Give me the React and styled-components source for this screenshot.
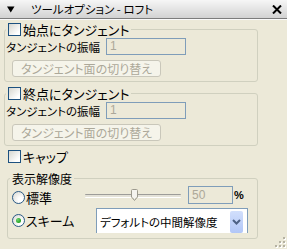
import React from "react";
import styled, { createGlobalStyle } from "styled-components";

const GlobalStyle = createGlobalStyle`
  html, body {
    margin: 0;
    padding: 0;
    background: #ece9d8;
  }
  body {
    font-family: "Noto Sans CJK JP", "Noto Sans", sans-serif;
    font-size: 13px;
    color: #000;
  }
  /* narrow kana like the old UI gothic face */
  body * {
    font-feature-settings: "palt";
  }
`;

const Panel = styled.div`
  position: relative;
  width: 287px;
  height: 249px;
  background: #ece9d8;
  overflow: hidden;
  font-size: 13px;
`;

const TitleBar = styled.div`
  height: 18px;
  display: flex;
  align-items: center;
  padding: 0 5px 0 7px;
  background: linear-gradient(#f6f6f6, #d2d2d2);
  border-bottom: 1px solid #7c7c7c;
  box-shadow: 0 1px 0 #fafafa;
`;

const Title = styled.span`
  flex: 1;
  margin-left: 16px;
  font-size: 11.5px;
  line-height: 18px;
  white-space: pre;
`;

const Body = styled.div`
  padding: 4px 0 0 4px;
`;

const Group = styled.div`
  box-sizing: border-box;
  width: ${p => p.$width}px;
  margin: ${p => p.$top}px 0 0 ${p => p.$left || 0}px;
  padding: 0 0 ${p => p.$bottom}px ${p => p.$padLeft}px;
  border: 1px solid #d0d0bf;
  border-radius: 3px;
`;

// caption sits on the group's top border and hides it behind its text
const GroupHead = styled.div`
  display: flex;
  align-items: center;
  width: max-content;
  height: 13px;
  line-height: 13px;
  margin: -7px 0 0 ${p => p.$shift || 0}px;
  padding: 0 2px;
  background: #ece9d8;
  font-size: ${p => (p.$small ? 12 : 13)}px;
  white-space: nowrap;
`;

const Check = styled.span`
  box-sizing: border-box;
  width: 13px;
  height: 13px;
  flex: none;
  border: 1px solid #1c5180;
  background: linear-gradient(135deg, #d6d6cf, #ffffff 80%);
`;

const CheckLabel = styled.span`
  margin-left: 2px;
  line-height: 13px;
  white-space: nowrap;
`;

const CapRow = styled.div`
  display: flex;
  align-items: center;
  height: 13px;
  margin: 4px 0 0 4px;
`;

const Row = styled.div`
  display: flex;
  align-items: center;
  height: ${p => p.$h}px;
  margin-top: ${p => p.$top}px;
`;

const FieldLabel = styled.span`
  width: 100px;
  flex: none;
  font-size: 11.5px;
  white-space: nowrap;
  overflow: hidden;
`;

const Field = styled.div`
  box-sizing: border-box;
  width: ${p => p.$width}px;
  height: ${p => p.$h}px;
  flex: none;
  margin-left: ${p => p.$left || 0}px;
  padding-left: 3px;
  border: 1px solid #7f9db9;
  background: #ece9d8;
  color: #aca899;
  font-family: "Liberation Sans", sans-serif;
  font-size: 12px;
  line-height: ${p => p.$h - 2}px;
`;

const SwitchButton = styled.div`
  box-sizing: border-box;
  width: 149px;
  height: 17px;
  margin: 5px 0 0 6px;
  border: 1px solid #c9c7ba;
  border-radius: 3px;
  background: #f5f4ea;
  color: #aca899;
  font-size: 12px;
  text-align: center;
  line-height: 15px;
  white-space: nowrap;
  overflow: hidden;
`;

const Radio = styled.span`
  position: relative;
  box-sizing: border-box;
  width: 13px;
  height: 13px;
  flex: none;
  margin-top: ${p => p.$drop || 0}px;
  border: 1px solid #2a5a86;
  border-radius: 50%;
  background: radial-gradient(circle at 70% 70%, #ffffff 20%, #d6d6cf 100%);

  &::after {
    content: "";
    display: ${p => (p.$on ? "block" : "none")};
    position: absolute;
    left: 3px;
    top: 3px;
    width: 5px;
    height: 5px;
    border-radius: 50%;
    background: radial-gradient(circle at 35% 35%, #6fd36f, #21a121 70%);
  }
`;

const RadioText = styled.span`
  width: ${p => p.$width}px;
  flex: none;
  margin-left: 1px;
  margin-top: ${p => p.$drop || 0}px;
  white-space: nowrap;
`;

const Slider = styled.div`
  position: relative;
  width: 96px;
  height: 14px;
  flex: none;
`;

const Track = styled.div`
  position: absolute;
  left: 0;
  right: 0;
  top: 6px;
  height: 2px;
  border-top: 1px solid #9d9c99;
  border-bottom: 1px solid #ffffff;
  background: #e4e2d8;
  border-radius: 1px;
`;

const Thumb = styled.svg`
  position: absolute;
  left: 46px;
  top: 1px;
`;

const Percent = styled.span`
  margin-left: 1px;
  font-family: "Liberation Sans", sans-serif;
  font-size: 11px;
  font-weight: bold;
`;

const Combo = styled.div`
  box-sizing: border-box;
  display: flex;
  align-items: flex-start;
  width: 152px;
  height: 25px;
  flex: none;
  padding: 2px 4px 0 3px;
  border: 1px solid #7f9db9;
  border-bottom: none;
  background: #ffffff;
`;

const ComboText = styled.span`
  flex: 1;
  min-width: 0;
  font-size: 11.5px;
  line-height: 22px;
  white-space: nowrap;
  overflow: hidden;
`;

const ComboButton = styled.div`
  display: flex;
  align-items: center;
  justify-content: center;
  width: 13px;
  height: 22px;
  flex: none;
  border-radius: 2px;
  background: linear-gradient(#d2dffc, #b1c6f7);
`;

const Grip = styled.svg`
  position: absolute;
  right: 1px;
  bottom: 1px;
`;

const Checkbox = ({ label }) => (
  <>
    <Check />
    <CheckLabel>{label}</CheckLabel>
  </>
);

const TangentGroup = ({ title, top }) => (
  <Group $width={254} $top={top} $bottom={4} $padLeft={1}>
    <GroupHead>
      <Checkbox label={title} />
    </GroupHead>
    <Row $h={17} $top={2}>
      <FieldLabel>タンジェントの振幅</FieldLabel>
      <Field $width={80} $h={17}>1</Field>
    </Row>
    <SwitchButton>タンジェント面の切り替え</SwitchButton>
  </Group>
);

export default function App() {
  return (
    <Panel>
      <GlobalStyle />
      <TitleBar>
        <svg width="8" height="7" viewBox="0 0 8 7">
          <path d="M0 0.5H7.5L3.75 6.5Z" fill="#000" />
        </svg>
        <Title>ツールオプション - ロフト</Title>
        <svg width="10" height="9" viewBox="0 0 10 9">
          <path d="M1 0.5L9 8.5M9 0.5L1 8.5" stroke="#000" strokeWidth="2" />
        </svg>
      </TitleBar>

      <Body>
        <TangentGroup title="始点にタンジェント" top={6} />
        <TangentGroup title="終点にタンジェント" top={11} />

        <CapRow>
          <Checkbox label="キャップ" />
        </CapRow>

        <Group $width={251} $top={15} $left={3} $bottom={5} $padLeft={4}>
          <GroupHead $shift={-2} $small>表示解像度</GroupHead>
          <Row $h={18} $top={1}>
            <Radio $drop={4} />
            <RadioText $width={59} $drop={4}>標準</RadioText>
            <Slider>
              <Track />
              <Thumb width="7" height="12" viewBox="0 0 7 12">
                <path
                  d="M0.5 1.5Q0.5 0.5 1.5 0.5H5.5Q6.5 0.5 6.5 1.5V8L3.5 11.5L0.5 8Z"
                  fill="#f4f3ee"
                  stroke="#9c9a8e"
                />
                <path d="M1.5 8.5L3.5 10.5L5.5 8.5" fill="none" stroke="#c8c5b6" />
              </Thumb>
            </Slider>
            <Field $width={45} $h={18} $left={7}>50</Field>
            <Percent>%</Percent>
          </Row>
          <Row $h={25} $top={4}>
            <Radio $on />
            <RadioText $width={70}>スキーム</RadioText>
            <Combo>
              <ComboText>デフォルトの中間解像度</ComboText>
              <ComboButton>
                <svg width="9" height="6" viewBox="0 0 9 6">
                  <path d="M1 1L4.5 4.5L8 1" fill="none" stroke="#4d6185" strokeWidth="2" />
                </svg>
              </ComboButton>
            </Combo>
          </Row>
        </Group>
      </Body>

      <Grip width="11" height="11" viewBox="0 0 11 11">
        {[[8, 0], [4, 4], [8, 4], [0, 8], [4, 8], [8, 8]].map(([x, y]) => (
          <g key={`${x}-${y}`}>
            <rect x={x + 1} y={y + 1} width="2" height="2" fill="#ffffff" />
            <rect x={x} y={y} width="2" height="2" fill="#b5b2a3" />
          </g>
        ))}
      </Grip>
    </Panel>
  );
}
